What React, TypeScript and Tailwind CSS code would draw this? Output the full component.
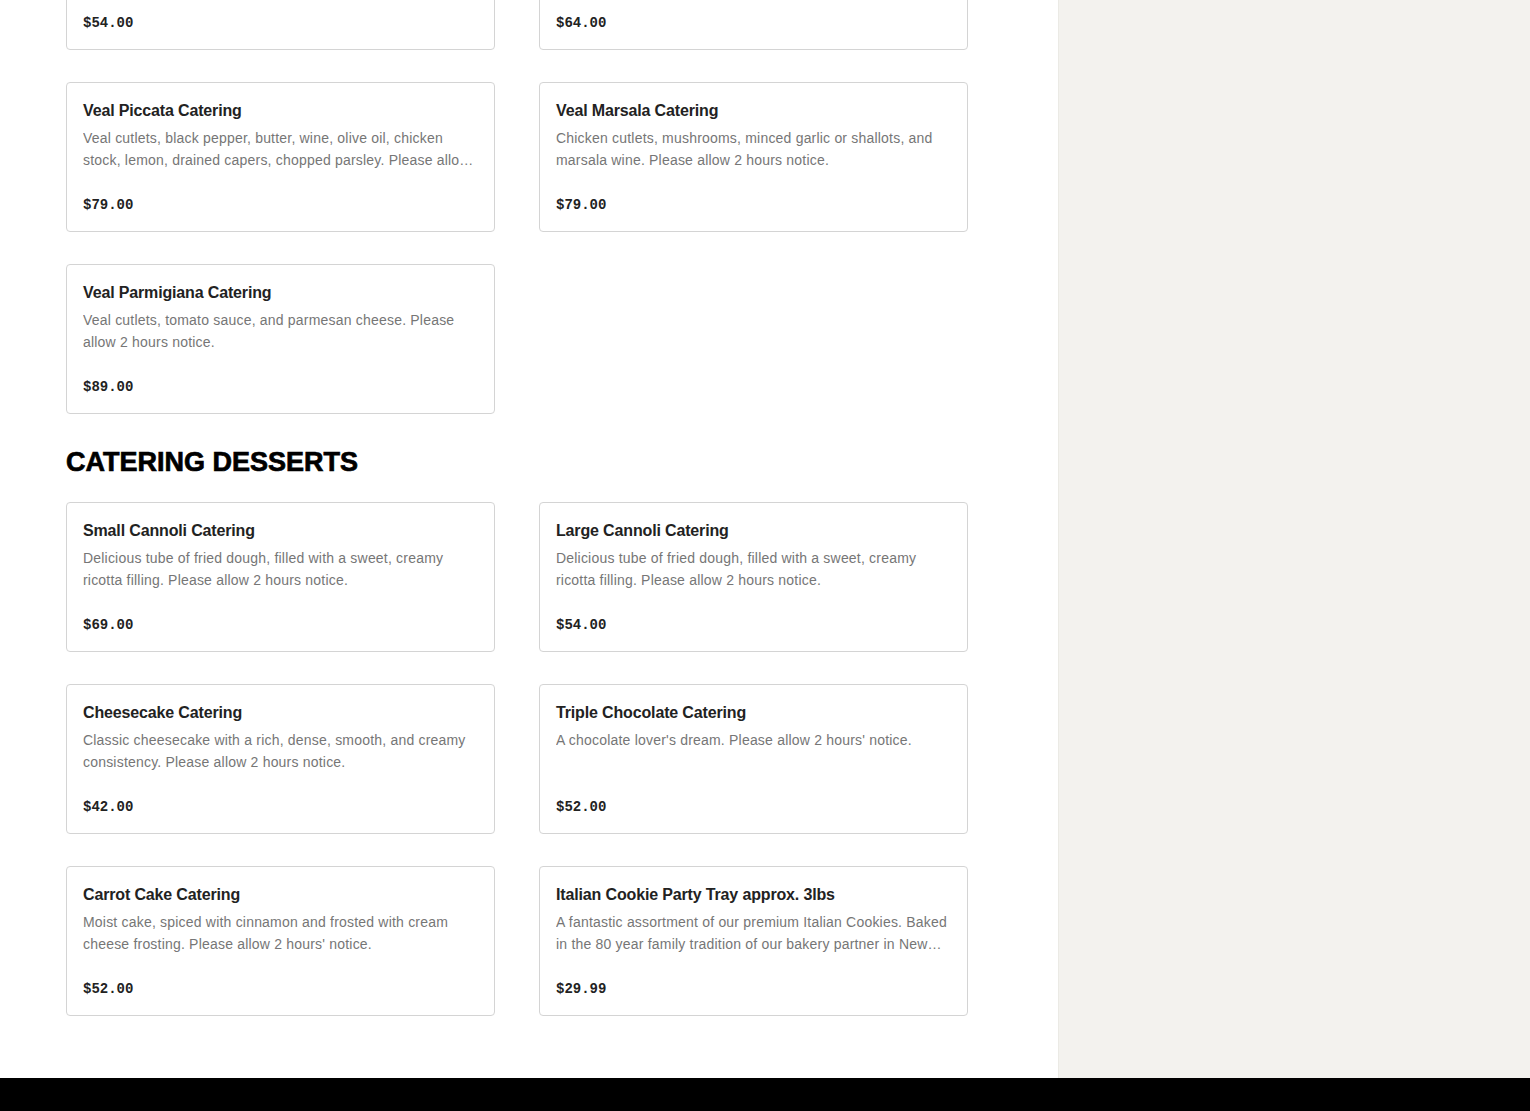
import React from "react";

type Item = { name: string; desc: string; price: string };

const entrees: Item[] = [
  { name: "Chicken Marsala Catering", desc: "Chicken cutlets, mushrooms, minced garlic or shallots, and marsala wine. Please allow 2 hours notice.", price: "$54.00" },
  { name: "Chicken Parmigiana Catering", desc: "Chicken cutlets, tomato sauce, and parmesan cheese. Please allow 2 hours notice.", price: "$64.00" },
  { name: "Veal Piccata Catering", desc: "Veal cutlets, black pepper, butter, wine, olive oil, chicken stock, lemon, drained capers, chopped parsley. Please allow 2 hours notice.", price: "$79.00" },
  { name: "Veal Marsala Catering", desc: "Chicken cutlets, mushrooms, minced garlic or shallots, and marsala wine. Please allow 2 hours notice.", price: "$79.00" },
  { name: "Veal Parmigiana Catering", desc: "Veal cutlets, tomato sauce, and parmesan cheese. Please allow 2 hours notice.", price: "$89.00" },
];

const desserts: Item[] = [
  { name: "Small Cannoli Catering", desc: "Delicious tube of fried dough, filled with a sweet, creamy ricotta filling. Please allow 2 hours notice.", price: "$69.00" },
  { name: "Large Cannoli Catering", desc: "Delicious tube of fried dough, filled with a sweet, creamy ricotta filling. Please allow 2 hours notice.", price: "$54.00" },
  { name: "Cheesecake Catering", desc: "Classic cheesecake with a rich, dense, smooth, and creamy consistency. Please allow 2 hours notice.", price: "$42.00" },
  { name: "Triple Chocolate Catering", desc: "A chocolate lover's dream. Please allow 2 hours' notice.", price: "$52.00" },
  { name: "Carrot Cake Catering", desc: "Moist cake, spiced with cinnamon and frosted with cream cheese frosting. Please allow 2 hours' notice.", price: "$52.00" },
  { name: "Italian Cookie Party Tray approx. 3lbs", desc: "A fantastic assortment of our premium Italian Cookies. Baked in the 80 year family tradition of our bakery partner in New York. Please allow 2 hours notice.", price: "$29.99" },
];

function MenuCard({ item }: { item: Item }) {
  return (
    <div className="h-[150px] rounded-[4px] border border-[#d4d4d4] bg-white px-4 pt-4 pb-4 flex flex-col">
      <div className="text-[16px] leading-6 font-bold tracking-[-0.15px] text-[#222]">{item.name}</div>
      <div className="mt-1 h-[44px] text-[14px] leading-[22px] tracking-[0.2px] text-[#767676] line-clamp-2">
        {item.desc}
      </div>
      <div className="mt-auto text-[14px] leading-5 font-bold text-[#222] font-['Liberation_Mono',monospace]">
        {item.price}
      </div>
    </div>
  );
}

export default function App() {
  return (
    <div className="min-h-screen bg-white font-['Liberation_Sans',Arial,sans-serif]">
      <div className="flex h-[1078px] overflow-hidden">
        <main className="w-[1058px] shrink-0 pl-[66px]">
          <div className="w-[902px] -mt-[100px]">
            <div className="grid grid-cols-2 gap-x-[44px] gap-y-8">
              {entrees.map((item) => (
                <MenuCard key={item.name} item={item} />
              ))}
            </div>
            <h2 className="mt-8 mb-6 text-[27px] leading-8 font-black uppercase text-black [-webkit-text-stroke:0.7px_black]">
              Catering Desserts
            </h2>
            <div className="grid grid-cols-2 gap-x-[44px] gap-y-8">
              {desserts.map((item) => (
                <MenuCard key={item.name} item={item} />
              ))}
            </div>
          </div>
        </main>
        <aside className="flex-1 bg-[#f3f2ee] border-l border-[#ebeae5]" />
      </div>
      <footer className="h-[33px] bg-black" />
    </div>
  );
}
